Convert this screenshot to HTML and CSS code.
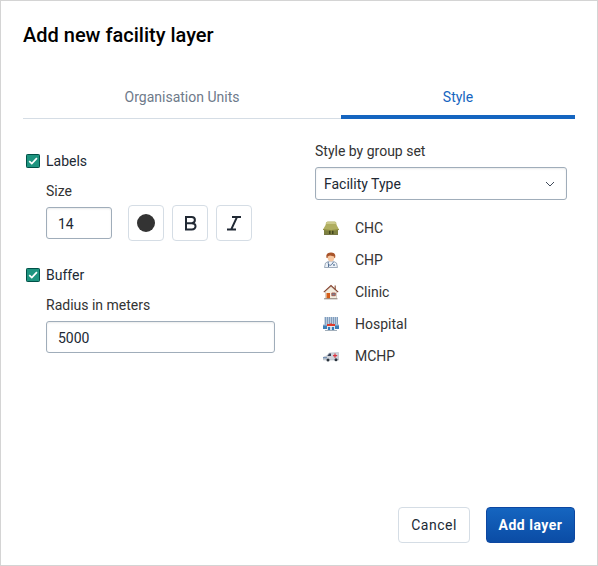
FILE: index.html
```html
<!DOCTYPE html>
<html lang="en">
<head>
<meta charset="utf-8">
<title>Add new facility layer</title>
<link rel="stylesheet" href="styles.css">
</head>
<body>
<main class="dialog">
  <h1 class="title">Add new facility layer</h1>
  <nav class="tabs">
    <a class="tab tab-units">Organisation Units</a>
    <a class="tab tab-style active">Style</a>
  </nav>
  <div class="content">
    <section class="left">
      <label class="check"><svg width="14" height="14" viewBox="0 0 14 14"><rect x=".5" y=".5" width="13" height="13" rx=".8" fill="#1d947f" stroke="#005047"/><path d="M3.2 7.1 5.8 9.6 10.9 4.2" fill="none" stroke="#fff" stroke-width="1.7"/></svg><span>Labels</span></label>
      <div class="label size-label">Size</div>
      <div class="row">
        <div class="input size">14</div>
        <div class="tool"><span class="dot"></span></div>
        <div class="tool"><svg width="34" height="34" viewBox="0 0 34 34"><path d="M13 11H18.6C23 11 23 17.2 18.6 17.2H13M18.6 17.2C23.8 17.2 23.8 23.5 18.8 23.5H13M13 10V24.5" fill="none" stroke="#212934" stroke-width="2"/></svg></div>
        <div class="tool"><svg width="34" height="34" viewBox="0 0 34 34"><path d="M15 11H24M10 23.5H19M20 11 14.2 23.5" fill="none" stroke="#212934" stroke-width="1.9"/></svg></div>
      </div>
      <label class="check buffer"><svg width="14" height="14" viewBox="0 0 14 14"><rect x=".5" y=".5" width="13" height="13" rx=".8" fill="#1d947f" stroke="#005047"/><path d="M3.2 7.1 5.8 9.6 10.9 4.2" fill="none" stroke="#fff" stroke-width="1.7"/></svg><span>Buffer</span></label>
      <div class="label radius-label">Radius in meters</div>
      <div class="input radius">5000</div>
    </section>
    <section class="right">
      <div class="label">Style by group set</div>
      <div class="input select"><span>Facility Type</span><svg width="10" height="6" viewBox="0 0 10 6"><path d="M1 1 5 5 9 1" fill="none" stroke="#404b5a"/></svg></div>
      <ul class="groups">
        <li><svg width="16" height="16" viewBox="0 0 16 16"><path d="M1 9H15V14.5H1Z" fill="#7d8040"/><path d="M3 2.5 4.5 1.5H12L13.2 2.5 13.6 5 16 9.5Q8 11.5 0 9.5L2.6 5Z" fill="#b0ae60"/><path d="M3.5 2H12.5L13 4H3Z" fill="#ccca8c"/><path d="M0 9.5Q8 11.5 16 9.5" fill="none" stroke="#8f8e42"/><path d="M6 10.8H7.5V14H6ZM9 10.8H10.5V14H9Z" fill="#45471f"/><path d="M1 14.5H15" stroke="#62652e" stroke-width=".8"/></svg>CHC</li>
        <li><svg width="16" height="16" viewBox="0 0 16 16"><path d="M1.5 15.5 2.5 11 6 9H10L13.5 11 14.5 15.5Z" fill="#edf2f8" stroke="#8998ac" stroke-width=".8"/><path d="M3.6 6C2.4 1.8 5 .4 8 .4S13.2 2 12 6Z" fill="#a9542a"/><path d="M4.6 4.5 7 3.5 11.3 4.5V6.5C11 8.5 9.5 9.5 8 9.5S4.6 8 4.6 6Z" fill="#f7c8a2"/><path d="M5.2 10C5 14 8 14 9 12L10.5 10M5.5 12V15" fill="none" stroke="#48658c" stroke-width=".9"/><circle cx="11" cy="13" r=".9" fill="#637e9e"/></svg>CHP</li>
        <li><svg width="16" height="16" viewBox="0 0 16 16"><path d="M2.5 7.5 8 2.5 13.5 7.5V14.5H2.5Z" fill="#f3eddf" stroke="#b4a999" stroke-width=".5"/><path d="M11.5 1.5H13V5.5H11.5Z" fill="#a9806b"/><path d="M.8 8.2 8 1.5 15.2 8.2" fill="none" stroke="#85432f" stroke-width="1.1"/><path d="M3.5 9H7V14.5H3.5Z" fill="#d45d19"/><path d="M8.8 9H12.3V11.7H8.8Z" fill="#788396" stroke="#a44c3a" stroke-width=".8"/><path d="M1 14.8H14.5" stroke="#8c827a"/></svg>Clinic</li>
        <li><svg width="16" height="16" viewBox="0 0 16 16"><path d="M1 1H15V9H1Z" fill="#cbd8e5"/><path d="M2 2H15M2 4H15M2 6H15M2 8H15" stroke="#38659a" stroke-dasharray="1.2 .8" stroke-width="1.1"/><path d="M0 9H5V13H0ZM11 9H16V13H11Z" fill="#3e7eb6"/><path d="M0 9H5M11 9H16" stroke="#a5bfd6"/><path d="M4 9H12V14.5H4Z" fill="#dbe5ee"/><path d="M4 8H7L8 7 9 8H12V10H4Z" fill="#df3c2c"/><path d="M5 11H11V14H5Z" fill="#367bb8"/><path d="M7.2 10H8.8V14H7.2Z" fill="#e9f0f5"/><path d="M2 14.5H14" stroke="#a2afbb"/></svg>Hospital</li>
        <li><svg width="16" height="16" viewBox="0 0 16 16"><path d="M0 11.8.5 9 4 7.8 6 5 15.5 4.5 16 12H1Z" fill="#cfd3da" stroke="#9ba4b0" stroke-width=".4"/><path d="M4.3 8 6.3 5.6H8V8Z" fill="#344058"/><path d="M0 9.8H4" stroke="#5478a5"/><path d="M10 7.7H14.2M12 5.6V9.8" stroke="#dd343e" stroke-width="1.2"/><circle cx="5" cy="12" r="1.5" fill="#29323c"/><circle cx="13" cy="11.7" r="1.5" fill="#29323c"/></svg>MCHP</li>
      </ul>
    </section>
  </div>
  <footer class="actions"><button class="btn">Cancel</button><button class="btn primary">Add layer</button></footer>
</main>
</body>
</html>
```

FILE: styles.css
```css
* { box-sizing: border-box; }
body { margin: 0; font: 14px/18px Roboto, sans-serif; color: #212934; background: #fff; }
svg { display: block; flex: none; }
.dialog { height: 566px; border: 1px solid #d4d4d4; padding: 22px; display: flex; flex-direction: column; }
.title { margin: 0; font-size: 20px; line-height: 24px; font-weight: 500; color: #000; }
.tabs { display: flex; height: 44px; margin-top: 28px; border-bottom: 1px solid #d5dde5; }
.tab { text-align: center; padding-top: 13px; height: 44px; color: #6e7a8a; }
.tab-units { width: 318px; }
.tab-style { width: 234px; }
.active { color: #1565c0; border-bottom: 4px solid #1565c0; }
.content { display: flex; flex: 1; }
.left { width: 292px; padding: 33px 0 0 3px; }
.right { width: 252px; padding-top: 23px; }
.check { display: flex; align-items: center; gap: 6px; height: 18px; }
.label { color: #333; }
.size-label { margin: 12px 0 5px 20px; }
.row { display: flex; align-items: center; gap: 8px; margin-left: 20px; height: 36px; }
.input { height: 32px; border: 1px solid #a0adba; border-radius: 3px; padding: 7px 11px; line-height: 18px; box-shadow: inset 0 1px 2px rgba(48,54,60,.1); }
.size { width: 66px; margin-right: 8px; }
.tool { width: 36px; height: 36px; border: 1px solid #d5dde5; border-radius: 4px; display: flex; align-items: center; justify-content: center; }
.dot { width: 18px; height: 18px; border-radius: 50%; background: #333; }
.buffer { margin-top: 25px; }
.radius-label { margin: 12px 0 7px 20px; }
.radius { width: 229px; margin-left: 20px; }
.select { height: 33px; margin-top: 7px; padding: 0 11px 0 8px; display: flex; align-items: center; justify-content: space-between; }
.groups { list-style: none; margin: 12px 0 0; padding: 0 0 0 8px; }
.groups li { display: flex; align-items: center; gap: 16px; height: 32px; color: #333; }
.actions { display: flex; justify-content: flex-end; gap: 16px; }
.btn { font: 14px/16px Roboto, sans-serif; letter-spacing: .5px; height: 36px; padding: 0; width: 72px; border: 1px solid #d5dde5; border-radius: 4px; color: #212934; background: #fff; }
.primary { width: 89px; font-weight: 700; color: #fff; border-color: #0d47a1; background: linear-gradient(#1565c0, #0b4ca5); }
```
